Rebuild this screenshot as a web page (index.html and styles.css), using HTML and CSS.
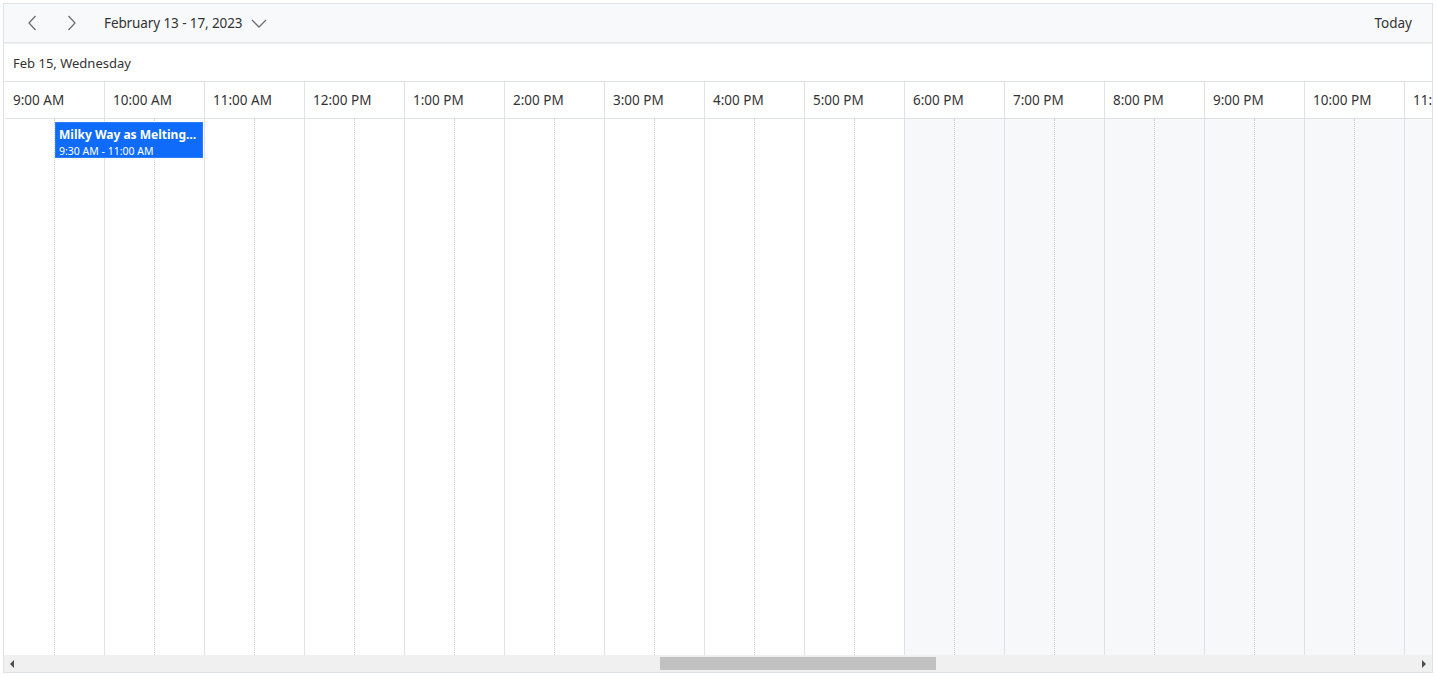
FILE: index.html
```html
<!DOCTYPE html>
<html>
<head>
<meta charset="utf-8">
<link rel="stylesheet" href="styles.css">
</head>
<body>
<div class="scheduler">
  <div class="toolbar">
    <button class="nav-btn prev" aria-label="Previous">
      <svg width="9" height="16" viewBox="0 0 9 16"><path d="M7.5 1 L1 8 L7.5 15" fill="none" stroke="#6b7075" stroke-width="1.3"/></svg>
    </button>
    <button class="nav-btn next" aria-label="Next">
      <svg width="9" height="16" viewBox="0 0 9 16"><path d="M1.5 1 L8 8 L1.5 15" fill="none" stroke="#6b7075" stroke-width="1.3"/></svg>
    </button>
    <div class="range">
      <span class="range-text">February 13 - 17, 2023</span>
      <svg class="caret" width="16" height="9" viewBox="0 0 16 9"><path d="M1 1 L8 8 L15 1" fill="none" stroke="#6b7075" stroke-width="1.3"/></svg>
    </div>
    <div class="spacer"></div>
    <div class="today">Today</div>
  </div>
  <div class="date-row">Feb 15, Wednesday</div>
  <div class="timeline">
    <div class="time-header">
      <div class="hcell">9:00 AM</div>
      <div class="hcell">10:00 AM</div>
      <div class="hcell">11:00 AM</div>
      <div class="hcell">12:00 PM</div>
      <div class="hcell">1:00 PM</div>
      <div class="hcell">2:00 PM</div>
      <div class="hcell">3:00 PM</div>
      <div class="hcell">4:00 PM</div>
      <div class="hcell">5:00 PM</div>
      <div class="hcell">6:00 PM</div>
      <div class="hcell">7:00 PM</div>
      <div class="hcell">8:00 PM</div>
      <div class="hcell">9:00 PM</div>
      <div class="hcell">10:00 PM</div>
      <div class="hcell">11:00 PM</div>
    </div>
    <div class="content">
      <div class="cols">
        <div class="col"><div class="half"></div><div class="half"></div></div>
        <div class="col"><div class="half"></div><div class="half"></div></div>
        <div class="col"><div class="half"></div><div class="half"></div></div>
        <div class="col"><div class="half"></div><div class="half"></div></div>
        <div class="col"><div class="half"></div><div class="half"></div></div>
        <div class="col"><div class="half"></div><div class="half"></div></div>
        <div class="col"><div class="half"></div><div class="half"></div></div>
        <div class="col"><div class="half"></div><div class="half"></div></div>
        <div class="col"><div class="half"></div><div class="half"></div></div>
        <div class="col off"><div class="half"></div><div class="half"></div></div>
        <div class="col off"><div class="half"></div><div class="half"></div></div>
        <div class="col off"><div class="half"></div><div class="half"></div></div>
        <div class="col off"><div class="half"></div><div class="half"></div></div>
        <div class="col off"><div class="half"></div><div class="half"></div></div>
        <div class="col off"><div class="half"></div><div class="half"></div></div>
      </div>
      <div class="event">
        <div class="event-title">Milky Way as Melting pot</div>
        <div class="event-time">9:30 AM - 11:00 AM</div>
      </div>
    </div>
  </div>
  <div class="hscroll">
    <div class="arrow-left"></div>
    <div class="track"><div class="thumb"></div></div>
    <div class="arrow-right"></div>
  </div>
</div>
</body>
</html>
```

FILE: styles.css
```css
* { box-sizing: border-box; }
html, body { margin: 0; padding: 0; background: #fff; }
body {
  font-family: "Noto Sans", "Open Sans", sans-serif;
  color: #333;
  padding: 3px 4px 0 3px;
}
.scheduler {
  width: 1430px;
  height: 670px;
  border: 1px solid #dee2e6;
  display: flex;
  flex-direction: column;
  overflow: hidden;
}
.toolbar {
  height: 39px;
  flex: none;
  background: #f8f9fa;
  border-bottom: 1px solid #e3e6e9;
  box-shadow: 0 1px 0 #eef0f2;
  display: flex;
  align-items: center;
  position: relative;
  z-index: 1;
}
.nav-btn {
  border: 0;
  background: none;
  padding: 0;
  width: 38px;
  height: 38px;
  display: flex;
  align-items: center;
  justify-content: center;
}
.nav-btn.prev { margin-left: 9px; }
.nav-btn.next { margin-left: 1px; }
.range {
  display: flex;
  align-items: center;
  margin-left: 14px;
}
.range-text {
  font-size: 13.5px;
  letter-spacing: -0.1px;
  color: #333;
}
.caret { margin-left: 9px; margin-top: 1px; }
.spacer { flex: 1; }
.today {
  font-size: 13.5px;
  margin-right: 20px;
  color: #333;
}
.date-row {
  height: 39px;
  flex: none;
  border-bottom: 1px solid #dee2e6;
  font-size: 13px;
  padding: 11px 0 0 9px;
  color: #333;
}
.timeline {
  flex: 1;
  display: flex;
  flex-direction: column;
  overflow: hidden;
  padding-left: 1px;
}
.time-header {
  height: 37px;
  flex: none;
  display: flex;
  border-bottom: 1px solid #dee2e6;
}
.hcell {
  width: 100px;
  flex: none;
  border-right: 1px solid #dee2e6;
  font-size: 13.5px;
  padding: 9px 0 0 8px;
  white-space: nowrap;
  overflow: hidden;
  color: #333;
}
.content {
  flex: 1;
  position: relative;
}
.cols {
  display: flex;
  height: 100%;
}
.col {
  width: 100px;
  flex: none;
  display: flex;
  border-right: 1px solid #dee2e6;
}
.col.off { background: #f7f8fa; }
.half { width: 50px; flex: none; }
.half:first-child { border-right: 1px dotted #cdd1d6; }
.half:last-child { width: 49px; }
.event {
  position: absolute;
  left: 50px;
  top: 3px;
  width: 148px;
  height: 36px;
  background: #0f6cfb;
  border: 1px solid #2a7cfb;
  color: #fff;
  padding: 4px 0 0 3px;
  overflow: hidden;
}
.event-title {
  font-weight: 700;
  font-size: 12px;
  line-height: 16px;
  white-space: nowrap;
  overflow: hidden;
  text-overflow: ellipsis;
  padding-right: 4px;
}
.event-time {
  font-size: 10.5px;
  line-height: 16px;
  white-space: nowrap;
}
.hscroll {
  height: 17px;
  flex: none;
  background: #f0f0f0;
  display: flex;
  align-items: center;
}
.arrow-left {
  width: 0; height: 0;
  margin-left: 6px;
  border-top: 4px solid transparent;
  border-bottom: 4px solid transparent;
  border-right: 4px solid #505050;
}
.track {
  flex: 1;
  height: 13px;
  position: relative;
  margin: 0 10px;
}
.thumb {
  position: absolute;
  left: 636px;
  width: 276px;
  top: 0;
  height: 13px;
  background: #c1c1c1;
}
.arrow-right {
  width: 0; height: 0;
  margin-right: 6px;
  border-top: 4px solid transparent;
  border-bottom: 4px solid transparent;
  border-left: 4px solid #505050;
}
```
